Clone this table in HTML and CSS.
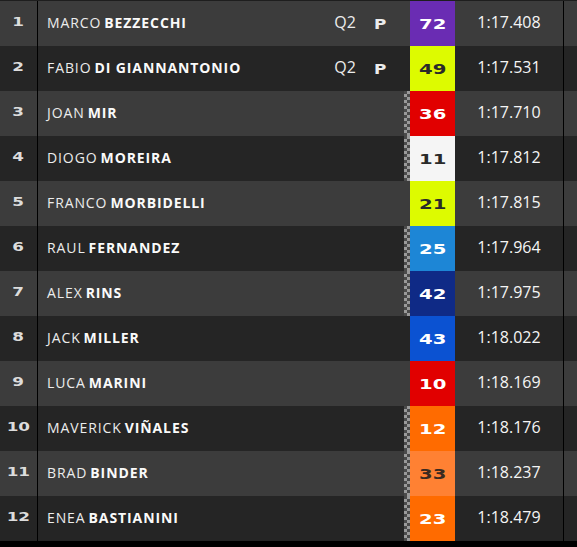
FILE: index.html
```html
<!DOCTYPE html>
<html>
<head>
<meta charset="utf-8">
<link rel="stylesheet" href="styles.css">
</head>
<body>
<div class="board">
  <div class="row odd">
    <div class="pos"><span class="wide">1</span></div>
    <div class="name">MARCO <b>BEZZECCHI</b></div>
    <div class="tag">Q2</div>
    <div class="pole"><span class="wide">P</span></div>
    <div class="gap"></div>
    <div class="flag"></div>
    <div class="num purple"><span class="wide">72</span></div>
    <div class="time">1:17.408</div>
    <div class="end"></div>
  </div>
  <div class="row even">
    <div class="pos"><span class="wide">2</span></div>
    <div class="name">FABIO <b>DI GIANNANTONIO</b></div>
    <div class="tag">Q2</div>
    <div class="pole"><span class="wide">P</span></div>
    <div class="gap"></div>
    <div class="flag"></div>
    <div class="num lime dark"><span class="wide">49</span></div>
    <div class="time">1:17.531</div>
    <div class="end"></div>
  </div>
  <div class="row odd">
    <div class="pos"><span class="wide">3</span></div>
    <div class="name">JOAN <b>MIR</b></div>
    <div class="tag"></div>
    <div class="pole"></div>
    <div class="gap"></div>
    <div class="flag checker"></div>
    <div class="num red"><span class="wide">36</span></div>
    <div class="time">1:17.710</div>
    <div class="end"></div>
  </div>
  <div class="row even">
    <div class="pos"><span class="wide">4</span></div>
    <div class="name">DIOGO <b>MOREIRA</b></div>
    <div class="tag"></div>
    <div class="pole"></div>
    <div class="gap"></div>
    <div class="flag checker"></div>
    <div class="num white dark"><span class="wide">11</span></div>
    <div class="time">1:17.812</div>
    <div class="end"></div>
  </div>
  <div class="row odd">
    <div class="pos"><span class="wide">5</span></div>
    <div class="name">FRANCO <b>MORBIDELLI</b></div>
    <div class="tag"></div>
    <div class="pole"></div>
    <div class="gap"></div>
    <div class="flag"></div>
    <div class="num lime dark"><span class="wide">21</span></div>
    <div class="time">1:17.815</div>
    <div class="end"></div>
  </div>
  <div class="row even">
    <div class="pos"><span class="wide">6</span></div>
    <div class="name">RAUL <b>FERNANDEZ</b></div>
    <div class="tag"></div>
    <div class="pole"></div>
    <div class="gap"></div>
    <div class="flag checker"></div>
    <div class="num sky"><span class="wide">25</span></div>
    <div class="time">1:17.964</div>
    <div class="end"></div>
  </div>
  <div class="row odd">
    <div class="pos"><span class="wide">7</span></div>
    <div class="name">ALEX <b>RINS</b></div>
    <div class="tag"></div>
    <div class="pole"></div>
    <div class="gap"></div>
    <div class="flag checker"></div>
    <div class="num navy"><span class="wide">42</span></div>
    <div class="time">1:17.975</div>
    <div class="end"></div>
  </div>
  <div class="row even">
    <div class="pos"><span class="wide">8</span></div>
    <div class="name">JACK <b>MILLER</b></div>
    <div class="tag"></div>
    <div class="pole"></div>
    <div class="gap"></div>
    <div class="flag"></div>
    <div class="num blue"><span class="wide">43</span></div>
    <div class="time">1:18.022</div>
    <div class="end"></div>
  </div>
  <div class="row odd">
    <div class="pos"><span class="wide">9</span></div>
    <div class="name">LUCA <b>MARINI</b></div>
    <div class="tag"></div>
    <div class="pole"></div>
    <div class="gap"></div>
    <div class="flag"></div>
    <div class="num red"><span class="wide">10</span></div>
    <div class="time">1:18.169</div>
    <div class="end"></div>
  </div>
  <div class="row even">
    <div class="pos"><span class="wide">10</span></div>
    <div class="name">MAVERICK <b>VIÑALES</b></div>
    <div class="tag"></div>
    <div class="pole"></div>
    <div class="gap"></div>
    <div class="flag checker"></div>
    <div class="num orange"><span class="wide">12</span></div>
    <div class="time">1:18.176</div>
    <div class="end"></div>
  </div>
  <div class="row odd">
    <div class="pos"><span class="wide">11</span></div>
    <div class="name">BRAD <b>BINDER</b></div>
    <div class="tag"></div>
    <div class="pole"></div>
    <div class="gap"></div>
    <div class="flag checker"></div>
    <div class="num lightorange darkish"><span class="wide">33</span></div>
    <div class="time">1:18.237</div>
    <div class="end"></div>
  </div>
  <div class="row even">
    <div class="pos"><span class="wide">12</span></div>
    <div class="name">ENEA <b>BASTIANINI</b></div>
    <div class="tag"></div>
    <div class="pole"></div>
    <div class="gap"></div>
    <div class="flag checker"></div>
    <div class="num orange"><span class="wide">23</span></div>
    <div class="time">1:18.479</div>
    <div class="end"></div>
  </div>
</div>
</body>
</html>
```

FILE: styles.css
```css
html, body {
  margin: 0;
  padding: 0;
  background: #000;
}
body {
  width: 577px;
  height: 547px;
  overflow: hidden;
}
.board {
  padding-top: 1px;
  background: #1e1e1e;
  display: flex;
  flex-direction: column;
}
.row {
  display: grid;
  grid-template-columns: 38px 1fr 42px 28px 10px 6px 45px 108px 14px;
  height: 45px;
  align-items: stretch;
}
.row.odd { background: #3c3c3c; }
.row.even { background: #252525; }
.row > div {
  display: flex;
  align-items: center;
  padding-bottom: 3px;
}
.row > .flag, .row > .num, .row > .gap, .row > .end {
  padding-bottom: 0;
}
.pos {
  justify-content: center;
  border-right: 1px solid #000;
  color: #dcdcdc;
  font-family: "DejaVu Sans", sans-serif;
  font-weight: bold;
  font-size: 12px;
}
.wide {
  display: inline-block;
  transform: scaleX(1.4);
}
.name {
  padding-left: 9px;
  font-family: "Open Sans", sans-serif;
  font-size: 14px;
  letter-spacing: 0.9px;
  color: #ececec;
  white-space: nowrap;
}
.name b {
  font-weight: 700;
  color: #fafafa;
  margin-left: 3px;
}
.tag {
  justify-content: center;
  font-family: "Open Sans", sans-serif;
  font-size: 16px;
  color: #ececec;
}
.pole {
  justify-content: center;
  font-family: "DejaVu Sans", sans-serif;
  font-weight: bold;
  font-size: 14px;
  color: #ececec;
}
.pole .wide {
  transform: scaleX(1.2);
  margin-top: 3px;
}
.checker {
  background: repeating-conic-gradient(#9a9a9a 0 25%, #4a4a4a 0 50%) 0 0 / 6px 6px;
}
.num {
  justify-content: center;
  font-family: "DejaVu Sans", sans-serif;
  font-weight: bold;
  font-size: 14px;
  color: #fff;
  padding-bottom: 1px;
}
.num.dark { color: #2a2a2a; }
.num.darkish { color: #3a2a20; }
.purple { background: #6a2cb3; }
.lime { background: #ddfb00; }
.red { background: #e10000; }
.white { background: #f5f5f5; }
.sky { background: #1d86d6; }
.navy { background: #0f2a86; }
.blue { background: #0b52d2; }
.orange { background: #ff6b00; }
.lightorange { background: #ff8133; }
.time {
  justify-content: center;
  font-family: "Open Sans", sans-serif;
  font-size: 16px;
  color: #f5f5f5;
}
.end {
  border-left: 1px solid #000;
}
```
